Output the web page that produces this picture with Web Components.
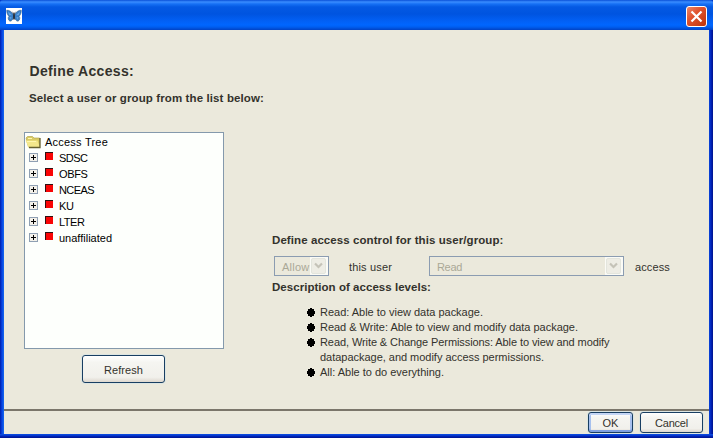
<!DOCTYPE html>
<html lang="en">
<head>
<meta charset="utf-8">
<title>Define Access</title>
<style>
html,body{margin:0;width:713px;height:438px;overflow:hidden}
body{font:11px/16px "Liberation Sans",Arial,sans-serif;color:#33322c}
</style>
</head>
<body>
<access-dialog></access-dialog>
<script>
const define = (name, html, setup) => customElements.define(name, class extends HTMLElement {
  constructor() {
    super();
    this.attachShadow({mode: 'open'}).innerHTML = html;
  }
  connectedCallback() { if (setup) setup.call(this, this.shadowRoot); }
});

/* A single line of text whose tracking is adjusted to a given advance width. */
define('fit-text', `<style>:host{display:block;white-space:nowrap;flex:none}span{display:inline-block}</style><span><slot></slot></span>`, function (r) {
  const s = r.querySelector('span'), w = +this.getAttribute('w');
  if (!w) return;
  s.style.letterSpacing = '0px';
  const n = this.textContent.length;
  s.style.letterSpacing = ((w - s.getBoundingClientRect().width) / n).toFixed(3) + 'px';
  this.style.width = w + 'px';
});

define('title-bar', `<style>
:host{display:flex;box-sizing:border-box;height:30px;padding:6px 6px 0 6px;justify-content:space-between;
background:linear-gradient(#0a50d8 0,#3a8dff 2px,#1670f4 4px,#0459e3 7px,#0054e0 14px,#0260f5 21px,#0066ff 25px,#005ef0 27px,#0142c4 30px);border-radius:3px 3px 0 0}
.logo{display:block;margin-top:2px}.close{display:block}
</style>
<svg class="logo" width="16" height="16" viewBox="0 0 16 16"><path fill="#fff" d="M0 0h16v16H0z"/>
<path fill="#3a80c8" stroke="#24507f" stroke-width=".5" d="M7.500 7C6 4 3.500 2 .7 2.200.6 5 1.500 7 3 8.200 1.600 9.600 2 12 4 13.300 6 13 7.200 11 7.600 9zM8.500 7C10 4 12.500 2 15.300 2.200 15.400 5 14.500 7 13 8.200 14.400 9.600 14 12 12 13.300 10 13 8.800 11 8.400 9z"/>
<path fill="#62a6e6" d="M2 3.500l4 3.700-2.800-.2zM14 3.500l-4 3.700 2.800-.2zM3.500 9l2 .2-.8 2.400zM12.500 9l-2 .2.8 2.400z"/>
<path stroke="#171b25" stroke-width="1.500" d="M8 5.500v6"/><path stroke="#171b25" stroke-width=".6" d="M8 6L6.500 3.800M8 6l1.500-2.200"/></svg>
<svg class="close" width="21" height="21" viewBox="0 0 21 21"><defs><linearGradient id="g" x1="0" y1="0" x2="1" y2="1"><stop offset="0" stop-color="#ee8a6c"/><stop offset=".4" stop-color="#e0532e"/><stop offset="1" stop-color="#bd3208"/></linearGradient></defs>
<rect x=".5" y=".5" width="20" height="20" rx="2.500" fill="url(#g)" stroke="#fff"/><path d="M5.500 5.500l10 10M15.500 5.500l-10 10" stroke="#fff" stroke-width="2.200"/></svg>`);

define('tree-row', `<style>
:host{display:flex;height:16px;color:#000;line-height:16px}
svg{flex:none}
.folder,:host([root]) .node{display:none}:host([root]) .folder{display:block}
</style>
<svg class="folder" width="20" height="16" viewBox="0 0 20 16"><path fill="#d9cb63" stroke="#b5a850" stroke-width=".7" d="M1 4L2.500 2.500h5l1.500 1.500h5.500V13H3.500z"/><path fill="#f3e78b" d="M.5 6.500h12L15 13.500H3.700z"/><path d="M15 4V13.500H4" fill="none" stroke="#66602f" stroke-width="1.300"/><path fill="#fff7b0" d="M3 4h4v1H3zM2 7h9v1H2z"/></svg>
<svg class="node" width="34" height="16" viewBox="0 0 34 16" shape-rendering="crispEdges"><rect x="4.500" y="3.500" width="8" height="8" rx="1" fill="#f3f1ea" stroke="#8fa0b3"/><path fill="#000" d="M6 7h5v1H6zM8 5h1v5H8z"/><path fill="#301010" d="M20 2h8v8h-8z"/><path fill="#f90505" d="M21 3h7v7h-7z"/></svg>
<slot></slot>`);

define('xp-button', `<style>
:host{display:flex;box-sizing:border-box;align-items:center;justify-content:center;border:1px solid #183e62;border-radius:3px;box-shadow:0 0 0 1px #dce5e2;
background:linear-gradient(#fff,#f5f5f1 25%,#f1f0eb 82%,#ddd7ce)}
:host([focus]){box-shadow:inset 0 2px #c3d5f5,inset 0 -2px #7f9fe0,inset 2px 0 #a6c0ee,inset -2px 0 #a6c0ee,0 0 0 1px #dce5e2}
</style><slot></slot>`);

define('xp-combo', `<style>
:host{display:flex;box-sizing:border-box;height:20px;border:1px solid #8b9cb1;color:#aaa897;justify-content:space-between;padding-left:7px}
.t{padding-top:2px}
</style><div class="t"><slot></slot></div>
<svg width="18" height="18" viewBox="0 0 18 18"><path fill="#fbfbf6" d="M0 0h18v18H0z"/><rect x="1.500" y="1.500" width="14" height="15" rx="1.500" fill="#eeede5" stroke="#e3e5dd"/><path d="M5 6.500l3.500 3.500L12 6.500" fill="none" stroke="#c5c3b8" stroke-width="2.200"/></svg>`);

define('level-item', `<style>:host{display:flex;line-height:15px}
svg{flex:none;width:13px;height:15px}</style>
<svg viewBox="0 0 13 15" shape-rendering="crispEdges"><path d="M3 3h2v1h2v2h1v3H7v2H5v1H3v-1H1V9H0V6h1V4h2z"/></svg><div><slot></slot></div>`);

define('access-dialog', `<style>
:host{display:flex;flex-direction:column;width:713px;height:438px;background:#0036c8}
.frame{flex:1;box-sizing:border-box;padding:0 4px 4px;min-height:0;
background:linear-gradient(#0a48dc,#0a48dc 1px,#0026c0 2px,#00138c) bottom/100% 4px no-repeat,linear-gradient(90deg,#001dab,#0744e3 2px,#166aee 4px) left/4px 100% no-repeat,linear-gradient(270deg,#00128a,#0022bb 2px,#0a48dc 4px) right/4px 100% no-repeat}
.client{height:100%;background:#ebe9dc;display:flex;flex-direction:column}
.main{height:379px;display:grid;grid-template-columns:200px 1fr;column-gap:48px;padding-left:20px;box-sizing:border-box}
.left{padding:33px 0 0}
h1,h2{margin:0;font-size:11.500px;line-height:16px;font-weight:bold}
h1{font-size:14px;padding-left:5.500px}
.left h2{padding:11px 0 0 5px}
.tree{box-sizing:border-box;width:200px;height:217px;border:1px solid #8499ac;background:#fdfffc;margin-top:26px;padding:1px 0 0}
.refresh{width:83px;height:28px;margin:6px 0 0 58px;padding-top:1px}
.right{padding-top:202px}
.controls{display:flex;height:20px;margin:8px 0 3px 2px}
.controls .label{padding-top:3px}
.c1{width:55px;margin-right:20px}.c2{width:195px;margin:0 11px 0 37px}
.levels{padding:10px 0 0 35px}
.foot{box-sizing:border-box;flex:1;border-top:2px solid #7b766b;display:flex;justify-content:flex-end;gap:7px;padding:1px 6px 0 0}
.ok{width:45px;height:21px}.cancel{width:63px;height:21px}
</style>
<title-bar></title-bar>
<div class="frame"><div class="client">
<div class="main">
<div class="left">
<h1><fit-text w="104.5">Define Access:</fit-text></h1>
<h2><fit-text w="235">Select a user or group from the list below:</fit-text></h2>
<div class="tree">
<tree-row root><fit-text w="63">Access Tree</fit-text></tree-row>
<tree-row><fit-text w="28.5">SDSC</fit-text></tree-row>
<tree-row><fit-text w="28.5">OBFS</fit-text></tree-row>
<tree-row><fit-text w="35">NCEAS</fit-text></tree-row>
<tree-row><fit-text w="14.5">KU</fit-text></tree-row>
<tree-row><fit-text w="25.5">LTER</fit-text></tree-row>
<tree-row><fit-text w="53">unaffiliated</fit-text></tree-row>
</div>
<xp-button class="refresh"><fit-text w="39">Refresh</fit-text></xp-button>
</div>
<div class="right">
<h2><fit-text w="231.5">Define access control for this user/group:</fit-text></h2>
<div class="controls"><xp-combo class="c1"><fit-text w="27.5">Allow</fit-text></xp-combo><fit-text class="label" w="43">this user</fit-text><xp-combo class="c2"><fit-text w="25">Read</fit-text></xp-combo><fit-text class="label" w="35">access</fit-text></div>
<h2><fit-text w="159">Description of access levels:</fit-text></h2>
<div class="levels">
<level-item><fit-text w="163">Read: Able to view data package.</fit-text></level-item>
<level-item><fit-text w="258">Read &amp; Write: Able to view and modify data package.</fit-text></level-item>
<level-item><fit-text w="289.500">Read, Write &amp; Change Permissions: Able to view and modify</fit-text><fit-text w="224">datapackage, and modify access permissions.</fit-text></level-item>
<level-item><fit-text w="124">All: Able to do everything.</fit-text></level-item>
</div>
</div>
</div>
<div class="foot"><xp-button class="ok" focus><fit-text w="16">OK</fit-text></xp-button><xp-button class="cancel"><fit-text w="33">Cancel</fit-text></xp-button></div>
</div></div>`);
</script>
</body>
</html>
